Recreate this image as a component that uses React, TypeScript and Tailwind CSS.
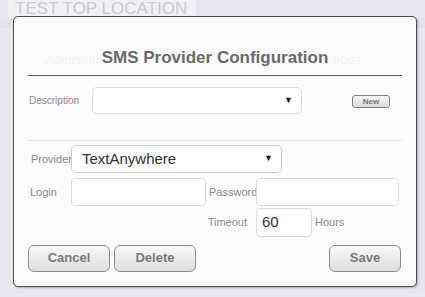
export default function App() {
  const font = { fontFamily: '"Liberation Sans", Arial, sans-serif' };
  return (
    <div
      style={font}
      className="relative w-[425px] h-[297px] overflow-hidden bg-[#e9e8f0]"
    >
      {/* faded page behind the modal */}
      <div className="absolute left-0 top-0 w-[425px] h-[297px]">
        <div className="h-[18px] w-[188px] ml-[8px] bg-[#f1f1f5] text-[17px] leading-[17px] text-[#c9c9cf] pl-[7px] whitespace-nowrap">
          TEST TOP LOCATION
        </div>
        <div className="absolute left-0 top-[18px] w-[425px] h-[10px] bg-[#e3e2ec]" />
        <div className="absolute right-0 top-[40px] w-[8px] h-[250px] bg-[#e6e5ee]" />
      </div>

      {/* modal */}
      <div className="absolute left-[13px] top-[16px] w-[404px] h-[271px] bg-[#fcfcfd] border border-[#4d4d4d] rounded-[5px] shadow-[1px_1px_2px_rgba(0,0,0,0.25)] px-[14px]">
        {/* ghost text from behind */}
        <div className="absolute left-[32px] top-[34px] text-[12px] text-[#f0f0f3] whitespace-nowrap">
          Administra
        </div>
        <div className="absolute left-[319px] top-[34px] text-[12px] text-[#f0f0f3] whitespace-nowrap">
          ncies
        </div>

        <div className="relative pt-[31px] text-center text-[17px] leading-[20px] font-bold text-[#6a6a6e]">
          SMS Provider Configuration
        </div>
        <div className="relative mt-[7px] h-px bg-[#5c5c5c]" />

        {/* description row */}
        <div className="relative mt-[11px] flex items-center h-[27px]">
          <div className="w-[64px] text-[10px] text-[#8a8a8e] pl-px">Description</div>
          <div className="w-[210px] h-[27px] border border-[#dcdce0] rounded-[5px] bg-white flex items-center justify-end pr-[8px]">
            <span className="text-[9px] text-[#222]">▼</span>
          </div>
          <div className="ml-[50px] mt-[1px] w-[38px] h-[13px] border border-[#808080] rounded-[3px] bg-gradient-to-b from-[#f6f6f6] to-[#dcdcdc] text-[8px] font-bold text-[#777] leading-[11px] text-center">
            New
          </div>
        </div>

        <div className="relative mt-[26px] h-px bg-[#e4e4e8]" />

        {/* provider row */}
        <div className="relative mt-[4px] flex items-center h-[28px]">
          <div className="w-[43px] text-[11px] text-[#8a8a8e] pl-[3px]">Provider</div>
          <div className="w-[211px] h-[28px] border border-[#cfcfd4] rounded-[5px] bg-white flex items-center justify-between pl-[10px] pr-[8px]">
            <span className="text-[15px] text-[#333]">TextAnywhere</span>
            <span className="text-[9px] text-[#222]">▼</span>
          </div>
        </div>

        {/* login / password */}
        <div className="relative mt-[5px] flex items-center h-[28px]">
          <div className="w-[43px] text-[11px] text-[#8a8a8e] pl-[2px]">Login</div>
          <div className="w-[135px] h-[28px] border border-[#dcdce0] rounded-[4px] bg-white" />
          <div className="w-[50px] text-[11px] text-[#8a8a8e] pl-[3px]">Password</div>
          <div className="w-[143px] h-[28px] border border-[#dcdce0] rounded-[4px] bg-white" />
        </div>

        {/* timeout */}
        <div className="relative mt-[2px] flex items-center h-[29px]">
          <div className="w-[228px] text-right pr-[9px] text-[11px] text-[#8a8a8e]">Timeout</div>
          <div className="w-[56px] h-[29px] border border-[#dcdce0] rounded-[4px] bg-white flex items-center pl-[5px] text-[15px] text-[#333]">
            60
          </div>
          <div className="pl-[3px] text-[11px] text-[#8a8a8e]">Hours</div>
        </div>

        {/* buttons */}
        <div className="relative mt-[7px] flex items-center h-[28px]">
          <div className="w-[82px] h-[27px] border border-[#8c8c8c] rounded-[6px] bg-gradient-to-b from-[#f8f8f8] to-[#dedede] text-[13px] font-bold text-[#7a7a7a] flex items-center justify-center">
            Cancel
          </div>
          <div className="ml-[4px] w-[82px] h-[27px] border border-[#8c8c8c] rounded-[6px] bg-gradient-to-b from-[#f8f8f8] to-[#dedede] text-[13px] font-bold text-[#7a7a7a] flex items-center justify-center">
            Delete
          </div>
          <div className="ml-auto mr-[1px] w-[72px] h-[27px] border border-[#8c8c8c] rounded-[6px] bg-gradient-to-b from-[#f8f8f8] to-[#dedede] text-[13px] font-bold text-[#7a7a7a] flex items-center justify-center">
            Save
          </div>
        </div>
      </div>
    </div>
  );
}
